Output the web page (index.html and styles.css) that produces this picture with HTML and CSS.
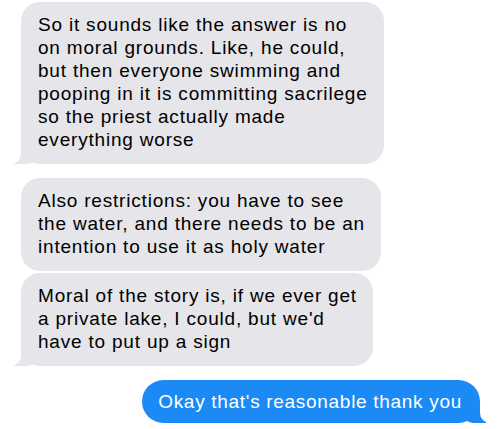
FILE: index.html
```html
<!DOCTYPE html>
<html lang="en">
<head>
    <meta charset="UTF-8">
    <meta name="viewport" content="width=device-width, initial-scale=1.0">
    <title>Messages</title>
    <link rel="stylesheet" href="styles.css">
</head>
<body>
    <div class="thread">
        <div class="msg them tail">
            So it sounds like the answer is no<br>
            on moral grounds. Like, he could,<br>
            but then everyone swimming and<br>
            pooping in it is committing sacrilege<br>
            so the priest actually made<br>
            everything worse
        </div>
        <div class="msg them first">
            Also restrictions: you have to see<br>
            the water, and there needs to be an<br>
            intention to use it as holy water
        </div>
        <div class="msg them tail">
            Moral of the story is, if we ever get<br>
            a private lake, I could, but we'd<br>
            have to put up a sign
        </div>
        <div class="msg me tail">
            Okay that's reasonable thank you
        </div>
    </div>
</body>
</html>
```

FILE: styles.css
```css
body {
    margin: 0;
    background: #fff;
    font-family: "Liberation Sans", Arial, sans-serif;
}
.thread {
    display: flex;
    flex-direction: column;
    align-items: flex-start;
    padding: 2px 20px 0 21px;
}
.msg {
    position: relative;
    font-size: 19px;
    letter-spacing: 0.8px;
    line-height: 23px;
    padding: 11px 16px 13px 17px;
    border-radius: 19px;
    margin-bottom: 2px;
}
.them {
    background: #e5e5ea;
    color: #000;
}
.them.tail {
    margin-bottom: 14px;
}
.me {
    align-self: flex-end;
    background: #1b8af5;
    color: #fff;
    letter-spacing: 0.7px;
    padding: 10px 18px 10px 16px;
    border-radius: 22px;
}

/* bubble tails */
.tail::before,
.tail::after {
    content: "";
    position: absolute;
    bottom: 0;
    height: 20px;
}
.them.tail::before {
    left: -7px;
    width: 24px;
    background: #e5e5ea;
    border-bottom-right-radius: 12px;
}
.them.tail::after {
    left: -10px;
    width: 10px;
    background: #fff;
    border-bottom-right-radius: 10px;
}
.me.tail::before {
    right: -6px;
    width: 24px;
    background: #1b8af5;
    border-bottom-left-radius: 12px;
}
.me.tail::after {
    right: -10px;
    width: 10px;
    background: #fff;
    border-bottom-left-radius: 10px;
}
```
